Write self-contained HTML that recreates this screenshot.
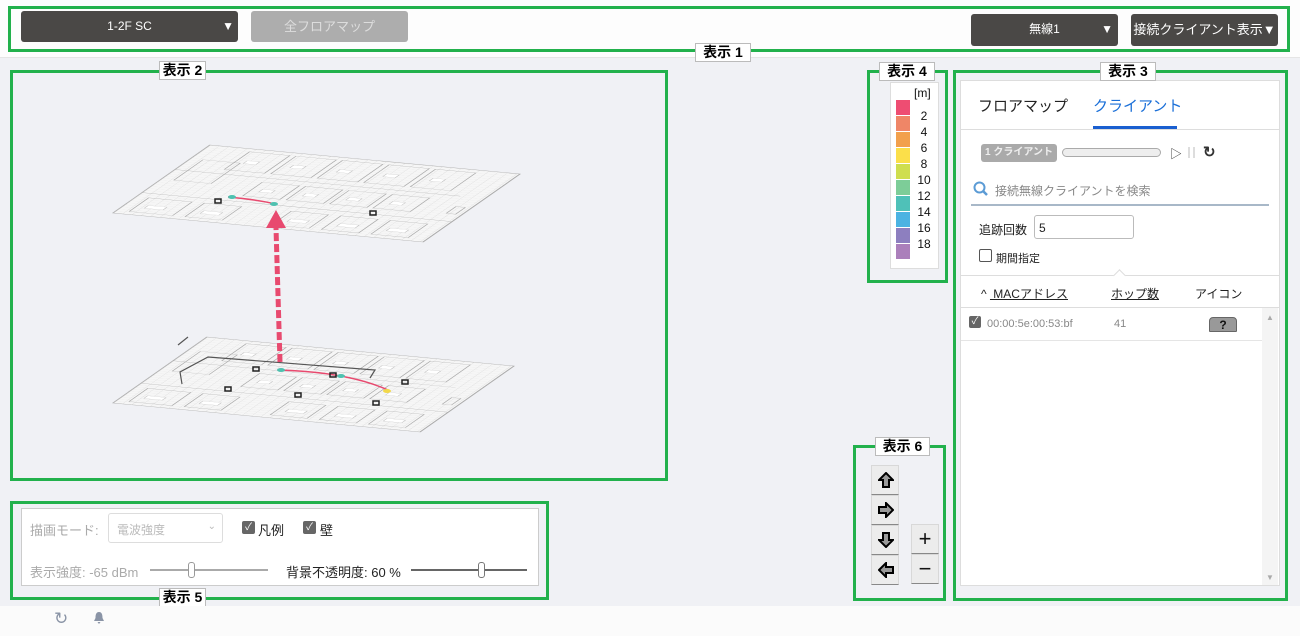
<!DOCTYPE html>
<html><head><meta charset="utf-8"><style>
*{box-sizing:border-box;margin:0;padding:0}
body{width:1300px;height:636px;background:#f0f1f5;font-family:"Liberation Sans","Noto Sans CJK JP",sans-serif;position:relative;overflow:hidden;font-size:13px;color:#333}
.a{position:absolute}
.g{position:absolute;border:3px solid #22b14c}
.lbl{position:absolute;background:#fff;border:1px solid #bbb;font-size:14px;font-weight:bold;color:#000;text-align:center;line-height:17px;height:19px}
.dk{position:absolute;background:#4a4846;color:#fff;border-radius:3px;font-size:12px;text-align:center;line-height:31px;height:31px}
.sw{width:14px;height:15px;margin-bottom:1px}
.ab{position:absolute;left:871px;width:28px;height:30px;background:#ececec;border:1px solid #d8d8d8;border-bottom:1px solid #888;text-align:center;line-height:28px;font-size:20px;color:#111}
.ab svg{position:absolute;left:6px;top:6px}
</style></head><body>
<div class="a" style="left:0;top:0;width:1300px;height:58px;background:#fdfdfd;border-bottom:1px solid #e5e5e5"></div>
<div class="g" style="left:8px;top:6px;width:1282px;height:46px"></div>
<div class="dk" style="left:21px;top:11px;width:217px">1-2F SC<span style="position:absolute;right:4px;font-size:12px">▼</span></div>
<div class="a" style="left:251px;top:11px;width:157px;height:31px;background:#adadad;border-radius:3px;color:#ddd;text-align:center;line-height:31px;font-size:13px">全フロアマップ</div>
<div class="dk" style="left:971px;top:14px;width:147px;height:32px">無線1<span style="position:absolute;right:5px">▼</span></div>
<div class="dk" style="left:1131px;top:14px;width:147px;height:32px;font-size:13px">接続クライアント表示▼</div>
<div class="lbl" style="left:695px;top:43px;width:56px">表示 1</div>

<div class="g" style="left:10px;top:70px;width:658px;height:411px"></div>
<div class="lbl" style="left:159px;top:61px;width:47px">表示 2</div>
<svg class="a" style="left:0;top:0" width="700" height="480">
<defs><pattern id="gr" width="3" height="3" patternUnits="userSpaceOnUse"><path d="M3 0H0V3" fill="none" stroke="#d4d4d4" stroke-width=".25"/></pattern>
<g id="fl">
<rect x="0" y="0" width="100" height="100" fill="#f6f6f6" stroke="#aaa" stroke-width=".5"/>
<rect x="0" y="0" width="100" height="100" fill="url(#gr)"/>
<g fill="none" stroke="#aaa" stroke-width=".35">
<rect x="14" y="70" width="13" height="26"/><rect x="29" y="70" width="13" height="26"/><rect x="44" y="70" width="13" height="26"/><rect x="59" y="70" width="13" height="26"/><rect x="74" y="70" width="13" height="26"/>
<rect x="30" y="38" width="12" height="20"/><rect x="44" y="38" width="12" height="20"/><rect x="58" y="38" width="12" height="20"/><rect x="72" y="38" width="12" height="20"/>
<rect x="4" y="4" width="14" height="20"/><rect x="22" y="4" width="12" height="20"/><rect x="50" y="4" width="12" height="20"/><rect x="66" y="4" width="12" height="20"/><rect x="82" y="4" width="12" height="20"/>
<rect x="4" y="50" width="12" height="30"/><line x1="0" y1="30" x2="100" y2="30"/><line x1="0" y1="64" x2="92" y2="64"/>
<rect x="95" y="40" width="3" height="10"/>
</g>
<g fill="#fff" stroke="#bbb" stroke-width=".25">
<rect x="17" y="80" width="4" height="4"/><rect x="32" y="80" width="4" height="4"/><rect x="47" y="80" width="4" height="4"/><rect x="62" y="80" width="4" height="4"/><rect x="77" y="80" width="4" height="4"/>
<rect x="33" y="45" width="4" height="4"/><rect x="47" y="45" width="4" height="4"/><rect x="61" y="45" width="4" height="4"/><rect x="75" y="45" width="4" height="4"/>
<rect x="7" y="10" width="6" height="4"/><rect x="25" y="10" width="6" height="4"/><rect x="53" y="10" width="6" height="4"/><rect x="69" y="10" width="6" height="4"/><rect x="85" y="10" width="6" height="4"/>
</g></g></defs>
<use href="#fl" transform="matrix(3.1,0.29,0.97,-0.68,113,213)"/>
<use href="#fl" transform="matrix(3.07,0.29,0.94,-0.66,113,403)"/>
<path d="M178,345 L188,337 M182,384 L180,372 L208,357 L375,370 L370,378" stroke="#555" stroke-width="1.2" fill="none"/>
<path d="M228,197 Q260,200 275,204" stroke="#e84a6f" stroke-width="1.5" fill="none"/>
<path d="M278,370 Q350,372 390,391" stroke="#e84a6f" stroke-width="1.5" fill="none"/>
<ellipse cx="232" cy="197" rx="4" ry="2" fill="#4fc1b0"/><ellipse cx="274" cy="204" rx="4" ry="2" fill="#4fc1b0"/>
<ellipse cx="281" cy="370" rx="4" ry="2" fill="#4fc1b0"/><ellipse cx="341" cy="376" rx="4" ry="2" fill="#4fc1b0"/><ellipse cx="387" cy="391" rx="4" ry="2" fill="#f2d84a"/>
<g fill="none" stroke="#222" stroke-width="1.5"><rect x="253" y="367" width="6" height="4"/><rect x="225" y="387" width="6" height="4"/><rect x="373" y="401" width="6" height="4"/><rect x="402" y="380" width="6" height="4"/><rect x="330" y="373" width="6" height="4"/><rect x="295" y="393" width="6" height="4"/><rect x="370" y="211" width="6" height="4"/><rect x="215" y="199" width="6" height="4"/></g>
<line x1="280" y1="362" x2="276" y2="228" stroke="#e84a6f" stroke-width="5" stroke-dasharray="8,3"/>
<polygon points="276,210 266,228 286,228" fill="#e84a6f"/>
</svg>

<div class="g" style="left:867px;top:70px;width:81px;height:213px"></div>
<div class="a" style="left:890px;top:82px;width:49px;height:187px;background:#fff;border:1px solid #ddd"></div>
<div class="a" style="left:914px;top:86px;font-size:12px;color:#111">[m]</div>
<div class="a" style="left:896px;top:100px">
<div class="sw" style="background:#ee4d72"></div><div class="sw" style="background:#ef8667"></div><div class="sw" style="background:#f2a04c"></div><div class="sw" style="background:#fbdf4a"></div><div class="sw" style="background:#cfde4e"></div><div class="sw" style="background:#7dcd98"></div><div class="sw" style="background:#4fc1b8"></div><div class="sw" style="background:#4bb3e2"></div><div class="sw" style="background:#8d7fbf"></div><div class="sw" style="background:#ab7fbb"></div></div>
<div class="a" style="left:916px;top:108px;font-size:12px;line-height:16px;color:#111;text-align:center;width:16px">2<br>4<br>6<br>8<br>10<br>12<br>14<br>16<br>18</div>
<div class="lbl" style="left:879px;top:62px;width:56px">表示 4</div>

<div class="g" style="left:953px;top:70px;width:335px;height:531px"></div>
<div class="a" style="left:960px;top:80px;width:320px;height:506px;background:#fff;border:1px solid #ddd"></div>
<div class="lbl" style="left:1100px;top:62px;width:56px">表示 3</div>
<div class="a" style="left:978px;top:95px;font-size:15px;color:#222">フロアマップ</div>
<div class="a" style="left:1093px;top:95px;font-size:15px;color:#1a6fd8">クライアント</div>
<div class="a" style="left:1093px;top:126px;width:84px;height:3px;background:#1a5fd0"></div>
<div class="a" style="left:961px;top:129px;width:318px;height:1px;background:#ddd"></div>
<div class="a" style="left:981px;top:144px;width:76px;height:18px;background:#aaa;border-radius:3px;color:#eee;font-size:10px;font-weight:bold;line-height:18px;text-align:center">1 クライアント</div>
<div class="a" style="left:1062px;top:148px;width:99px;height:9px;border:1px solid #aaa;border-radius:5px;background:#eee"></div>
<div class="a" style="left:1170px;top:145px;font-size:12px;color:#333">▷</div>
<div class="a" style="left:1188px;top:147px;width:2px;height:11px;background:#ddd"></div><div class="a" style="left:1193px;top:147px;width:2px;height:11px;background:#ddd"></div>
<div class="a" style="left:1203px;top:143px;font-size:15px;font-weight:bold;color:#333">↻</div>
<svg class="a" style="left:973px;top:181px" width="16" height="16"><circle cx="6.5" cy="6.5" r="5" stroke="#5b9bd5" stroke-width="2" fill="none"/><line x1="10" y1="10" x2="14" y2="14" stroke="#5b9bd5" stroke-width="2.5"/></svg>
<div class="a" style="left:995px;top:182px;font-size:12px;color:#888">接続無線クライアントを検索</div>
<div class="a" style="left:971px;top:204px;width:298px;height:2px;background:#a8b8c8"></div>
<div class="a" style="left:979px;top:221px;font-size:12px;color:#222">追跡回数</div>
<div class="a" style="left:1034px;top:215px;width:100px;height:24px;border:1px solid #bbb;border-radius:3px;padding:5px 4px;font-size:12px;color:#222">5</div>
<div class="a" style="left:979px;top:249px;width:13px;height:13px;border:1px solid #555;border-radius:2px"></div>
<div class="a" style="left:996px;top:250px;font-size:11px;color:#222">期間指定</div>
<div class="a" style="left:961px;top:275px;width:318px;height:1px;background:#ddd"></div>
<div class="a" style="left:1115px;top:271px;width:9px;height:9px;background:#fff;border-left:1px solid #ddd;border-top:1px solid #ddd;transform:rotate(45deg)"></div>
<div class="a" style="left:981px;top:285px;font-size:12px;color:#222">^ <u>&nbsp;MACアドレス</u></div>
<div class="a" style="left:1111px;top:285px;font-size:12px;color:#222"><u>ホップ数</u></div>
<div class="a" style="left:1195px;top:285px;font-size:12px;color:#222">アイコン</div>
<div class="a" style="left:961px;top:307px;width:318px;height:1px;background:#ddd"></div>
<div class="a" style="left:1262px;top:308px;width:16px;height:277px;background:#f4f4f4"></div>
<div class="a" style="left:1266px;top:313px;font-size:8px;color:#aaa">▲</div><div class="a" style="left:1266px;top:573px;font-size:8px;color:#aaa">▼</div>
<div class="a" style="left:969px;top:316px;width:12px;height:12px;background:#666;border-radius:2px;color:#fff;font-size:10px;line-height:12px;text-align:center">✓</div>
<div class="a" style="left:987px;top:318px;font-size:11px;color:#888">00:00:5e:00:53:bf</div>
<div class="a" style="left:1114px;top:318px;font-size:11px;color:#888">41</div>
<div class="a" style="left:1209px;top:317px;width:28px;height:15px;background:#999;border:1px solid #666;border-radius:4px 4px 1px 1px;color:#111;font-weight:bold;font-size:12px;text-align:center;line-height:14px">?</div>
<div class="a" style="left:961px;top:340px;width:301px;height:1px;background:#e5e5e5"></div>

<div class="g" style="left:853px;top:445px;width:93px;height:156px"></div>
<div class="lbl" style="left:875px;top:437px;width:55px">表示 6</div>
<div class="ab" style="top:465px"><svg width="16" height="16"><path d="M8,1 L15,8 L11,8 L11,15 L5,15 L5,8 L1,8 Z" fill="#999" stroke="#000" stroke-width="2" stroke-linejoin="miter"/></svg></div>
<div class="ab" style="top:495px"><svg width="16" height="16"><path d="M15,8 L8,1 L8,5 L1,5 L1,11 L8,11 L8,15 Z" fill="#999" stroke="#000" stroke-width="2"/></svg></div>
<div class="ab" style="top:525px"><svg width="16" height="16"><path d="M8,15 L15,8 L11,8 L11,1 L5,1 L5,8 L1,8 Z" fill="#999" stroke="#000" stroke-width="2"/></svg></div>
<div class="ab" style="top:555px"><svg width="16" height="16"><path d="M1,8 L8,1 L8,5 L15,5 L15,11 L8,11 L8,15 Z" fill="#999" stroke="#000" stroke-width="2"/></svg></div>
<div class="ab" style="left:911px;top:524px;height:30px;font-size:22px">+</div><div class="ab" style="left:911px;top:554px;height:30px;font-size:22px">−</div>

<div class="g" style="left:10px;top:501px;width:539px;height:99px"></div>
<div class="a" style="left:21px;top:508px;width:518px;height:78px;background:#fff;border:1px solid #ccc"></div>
<div class="a" style="left:30px;top:520px;font-size:13px;color:#aaa">描画モード:</div>
<div class="a" style="left:108px;top:513px;width:115px;height:30px;border:1px solid #ddd;border-radius:3px;color:#bbb;font-size:12px;padding:7px 8px">電波強度<span style="position:absolute;right:6px;font-size:10px">⌄</span></div>
<div class="a" style="left:242px;top:521px;width:13px;height:13px;background:#666;border-radius:2px;color:#fff;font-size:10px;text-align:center;line-height:13px">✓</div>
<div class="a" style="left:258px;top:520px;font-size:13px;color:#222">凡例</div>
<div class="a" style="left:303px;top:521px;width:13px;height:13px;background:#666;border-radius:2px;color:#fff;font-size:10px;text-align:center;line-height:13px">✓</div>
<div class="a" style="left:320px;top:520px;font-size:13px;color:#222">壁</div>
<div class="a" style="left:30px;top:562px;font-size:13px;color:#aaa">表示強度: -65 dBm</div>
<div class="a" style="left:150px;top:569px;width:118px;height:2px;background:#aaa"></div>
<div class="a" style="left:188px;top:562px;width:7px;height:16px;border:1px solid #999;border-radius:3px;background:#fff"></div>
<div class="a" style="left:286px;top:562px;font-size:13px;color:#222">背景不透明度: 60 %</div>
<div class="a" style="left:411px;top:569px;width:116px;height:2px;background:#666"></div>
<div class="a" style="left:478px;top:562px;width:7px;height:16px;border:1px solid #777;border-radius:3px;background:#fff"></div>
<div class="lbl" style="left:159px;top:588px;width:47px">表示 5</div>

<div class="a" style="left:0;top:606px;width:1300px;height:30px;background:#fbfbfb"></div>
<div class="a" style="left:54px;top:609px;font-size:17px;color:#8a94a6">↻</div>
<svg class="a" style="left:93px;top:611px" width="12" height="14"><path d="M6,1 C3,1 2.5,4 2.5,7 L1,10 L11,10 L9.5,7 C9.5,4 9,1 6,1 Z M4.5,11 L7.5,11 L6,13 Z" fill="#8a94a6"/></svg>
</body></html>
